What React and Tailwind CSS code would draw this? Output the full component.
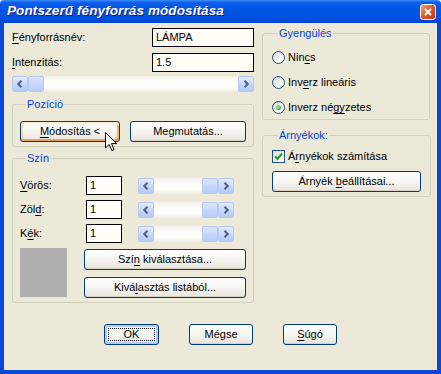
import React from 'react'

function Ul({ children }) {
  return <span className="underline underline-offset-[2px]">{children}</span>
}

function ArrowBtn({ dir }) {
  return (
    <div className="w-[16px] h-[16px] shrink-0 rounded-[2px] border border-[#B7C9F2] bg-[linear-gradient(to_bottom,#E3EBFE,#C6D6FC_55%,#B5C9F6)] flex items-center justify-center">
      <svg width="8" height="8" viewBox="0 0 8 8" aria-hidden>
        <polyline
          points={dir === 'left' ? '5.5,0.8 2.3,4 5.5,7.2' : '2.5,0.8 5.7,4 2.5,7.2'}
          fill="none"
          stroke="#4D6185"
          strokeWidth="2"
        />
      </svg>
    </div>
  )
}

function Thumb() {
  return (
    <div className="w-[16px] h-[16px] shrink-0 rounded-[2px] border border-[#B7C9F2] bg-[linear-gradient(to_bottom,#DCE6FE,#C6D6FC_55%,#B9CCF7)]" />
  )
}

function ScrollBar({ className = '', thumb = 'left' }) {
  return (
    <div className={`flex h-[16px] bg-[linear-gradient(to_bottom,#F1EFE8,#FEFEFB_35%,#FEFEFB_70%,#EEEDE5)] ${className}`}>
      <ArrowBtn dir="left" />
      {thumb === 'left' ? <Thumb /> : null}
      <div className="flex-1" />
      {thumb === 'right' ? <Thumb /> : null}
      <ArrowBtn dir="right" />
    </div>
  )
}

function XPButton({ children, className = '', variant, cursor }) {
  const ring =
    variant === 'hot'
      ? 'shadow-[inset_0_2px_0_#FFF0CF,inset_0_-2px_0_#E5A34B,inset_2px_0_0_#FBD89C,inset_-2px_0_0_#F4B863]'
      : variant === 'default'
        ? 'shadow-[inset_0_0_0_2px_#B6C8F3]'
        : 'shadow-[inset_0_-1px_0_#D6D0C5]'
  return (
    <button
      type="button"
      className={`relative h-[21px] shrink-0 flex items-center justify-center rounded-[3px] border border-[#003C74] bg-[linear-gradient(to_bottom,#FFFFFF,#F4F3EE_60%,#E6E3DA)] text-black ${ring} ${className}`}
    >
      {variant === 'default' && (
        <span className="absolute inset-[3px] border border-dotted border-black" />
      )}
      <span className="relative">{children}</span>
      {cursor && (
        <svg className="absolute left-[84px] top-[10px]" width="13" height="20" viewBox="0 0 13 20" aria-hidden>
          <path
            d="M0.5 0.5 L0.5 16 L4.2 12.4 L6.8 18.5 L9 17.6 L6.5 11.6 L11.5 11.6 Z"
            fill="white"
            stroke="black"
            strokeWidth="1"
            strokeLinejoin="miter"
          />
        </svg>
      )}
    </button>
  )
}

function Group({ title, className = '', children }) {
  return (
    <fieldset className={`border border-[#D0D0BF] rounded-[3px] ${className}`}>
      <legend className="ml-[6px] px-[1px] leading-[13px] text-[#0046D5]">{title}</legend>
      {children}
    </fieldset>
  )
}

function TextBox({ value, className = '' }) {
  return (
    <div className={`h-[19px] border border-black bg-[#FFFDF6] pl-[3px] flex items-center leading-none ${className}`}>
      {value}
    </div>
  )
}

function Radio({ checked, children }) {
  return (
    <div className="flex items-center h-[13px] gap-[3px]">
      <span className="w-[13px] h-[13px] shrink-0 rounded-full border border-[#1C5180] bg-[linear-gradient(135deg,#D6D6CE,#FFFFFF_75%)] flex items-center justify-center">
        {checked && (
          <span className="w-[5px] h-[5px] rounded-full bg-[radial-gradient(circle_at_35%_35%,#9CEB98,#21A121)]" />
        )}
      </span>
      <span>{children}</span>
    </div>
  )
}

function ColorRow({ label, value }) {
  return (
    <div className="flex items-center h-[19px]">
      <span className="w-[66px]">{label}</span>
      <TextBox value={value} className="w-[36px]" />
      <ScrollBar className="ml-[16px] w-[96px]" thumb="right" />
    </div>
  )
}

export default function App() {
  return (
    <div className="w-[441px] h-[374px] flex flex-col font-['Liberation_Sans',Arial,sans-serif] text-[11px] text-black">
      {/* Title bar */}
      <div className="h-[23px] shrink-0 flex items-center justify-between pl-[7px] pr-[5px] rounded-t-[4px] bg-[linear-gradient(to_bottom,#3A8CFA_0%,#0A5EE8_12%,#0055E5_40%,#0052E0_80%,#0042CC_100%)]">
        <span className="text-white font-bold italic text-[13.5px] tracking-[0.1px] [text-shadow:1px_1px_#0F1D8A]">
          Pontszerű fényforrás módosítása
        </span>
        <div className="w-[16px] h-[16px] rounded-[3px] border border-white bg-[linear-gradient(135deg,#F4A385,#E0552D_50%,#C23A12)] flex items-center justify-center">
          <svg width="8" height="8" viewBox="0 0 8 8" aria-hidden>
            <path d="M1 1L7 7M7 1L1 7" stroke="white" strokeWidth="2" />
          </svg>
        </div>
      </div>

      {/* Body */}
      <div className="flex-1 flex flex-col bg-[#ECE9D8] border-x-4 border-b-4 border-[#0A47D4] pl-[8px] pr-[7px] pt-[5px]">
        <div className="flex gap-[8px]">
          {/* Left column */}
          <div className="w-[242px] flex flex-col">
            <div className="flex items-center justify-between h-[19px]">
              <span><Ul>F</Ul>ényforrásnév:</span>
              <TextBox value="LÁMPA" className="w-[102px]" />
            </div>
            <div className="mt-[6px] flex items-center justify-between h-[19px]">
              <span><Ul>I</Ul>ntenzitás:</span>
              <TextBox value="1.5" className="w-[102px]" />
            </div>
            <ScrollBar className="mt-[4px]" thumb="left" />

            <Group title="Pozíció" className="mt-[6px] px-[7px] pb-[4px]">
              <div className="mt-[10px] flex gap-[10px]">
                <XPButton variant="hot" className="w-[100px]" cursor>
                  <Ul>M</Ul>ódosítás &lt;
                </XPButton>
                <XPButton className="w-[116px]">Megmutatás...</XPButton>
              </div>
            </Group>

            <Group title="Szín" className="mt-[5px] px-[7px] pb-[4px]">
              <div className="mt-[11px] flex flex-col gap-[5px]">
                <ColorRow label={<><Ul>V</Ul>örös:</>} value="1" />
                <ColorRow label={<>Zöl<Ul>d</Ul>:</>} value="1" />
                <ColorRow label={<>K<Ul>é</Ul>k:</>} value="1" />
              </div>
              <div className="mt-[5px] flex gap-[17px]">
                <div className="w-[47px] h-[49px] bg-[#AFAFAF]" />
                <div className="flex-1 flex flex-col gap-[7px] pt-[1px]">
                  <XPButton className="w-full">Szí<Ul>n</Ul> kiválasztása...</XPButton>
                  <XPButton className="w-full">Kivá<Ul>l</Ul>asztás listából...</XPButton>
                </div>
              </div>
            </Group>
          </div>

          {/* Right column */}
          <div className="w-[168px] flex flex-col -mt-[1px]">
            <Group title="Gyengülés" className="px-[9px] pb-[5px]">
              <div className="mt-[11px] flex flex-col gap-[12px]">
                <Radio>Nin<Ul>c</Ul>s</Radio>
                <Radio>Inv<Ul>e</Ul>rz lineáris</Radio>
                <Radio checked>Inverz né<Ul>gy</Ul>zetes</Radio>
              </div>
            </Group>

            <Group title="Árnyékok:" className="mt-[9px] px-[9px] pb-[4px]">
              <div className="mt-[8px] flex items-center h-[13px] gap-[3px]">
                <span className="w-[13px] h-[13px] shrink-0 border border-[#1C5180] bg-[linear-gradient(135deg,#D6D6CE,#FFFFFF_75%)] flex items-center justify-center">
                  <svg width="9" height="9" viewBox="0 0 9 9" aria-hidden>
                    <polyline points="1,4.5 3.5,7 8,1.5" fill="none" stroke="#21A121" strokeWidth="2" />
                  </svg>
                </span>
                <span>Á<Ul>r</Ul>nyékok számítása</span>
              </div>
              <XPButton className="mt-[8px] w-[149px]">Árnyék <Ul>b</Ul>eállításai...</XPButton>
            </Group>
          </div>
        </div>

        {/* Dialog buttons */}
        <div className="mt-[21px] ml-[92px] flex">
          <XPButton variant="default" className="w-[55px]">OK</XPButton>
          <XPButton className="ml-[30px] w-[64px]">Mégse</XPButton>
          <XPButton className="ml-[30px] w-[54px]"><Ul>S</Ul>úgó</XPButton>
        </div>
      </div>
    </div>
  )
}
